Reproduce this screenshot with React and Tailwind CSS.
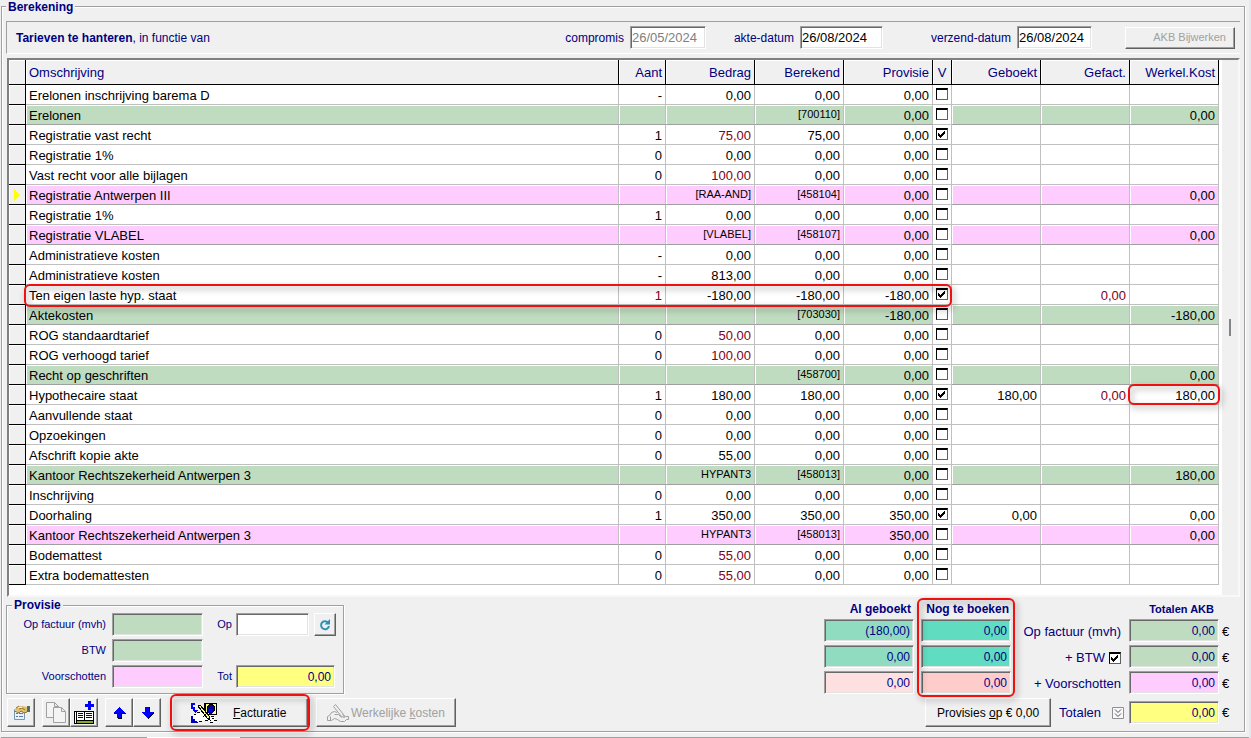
import React from "react";

const ROWS = [
  { name: "Erelonen inschrijving barema D", qty: "-", amount: "0,00", calc: "0,00", prov: "0,00" },
  { name: "Erelonen", tone: "green", calc: "[700110]", prov: "0,00", cost: "0,00" },
  { name: "Registratie vast recht", qty: "1", amount: "75,00", red: true, calc: "75,00", prov: "0,00", on: true },
  { name: "Registratie 1%", qty: "0", amount: "0,00", calc: "0,00", prov: "0,00" },
  { name: "Vast recht voor alle bijlagen", qty: "0", amount: "100,00", red: true, calc: "0,00", prov: "0,00" },
  { name: "Registratie Antwerpen III", tone: "pink", amount: "[RAA-AND]", calc: "[458104]", prov: "0,00", cost: "0,00", current: true },
  { name: "Registratie 1%", qty: "1", amount: "0,00", calc: "0,00", prov: "0,00" },
  { name: "Registratie VLABEL", tone: "pink", amount: "[VLABEL]", calc: "[458107]", prov: "0,00", cost: "0,00" },
  { name: "Administratieve kosten", qty: "-", amount: "0,00", calc: "0,00", prov: "0,00" },
  { name: "Administratieve kosten", qty: "-", amount: "813,00", calc: "0,00", prov: "0,00" },
  { name: "Ten eigen laste hyp. staat", qty: "1", redQty: true, amount: "-180,00", calc: "-180,00", prov: "-180,00", on: true, billed: "0,00" },
  { name: "Aktekosten", tone: "green", calc: "[703030]", prov: "-180,00", cost: "-180,00" },
  { name: "ROG standaardtarief", qty: "0", amount: "50,00", red: true, calc: "0,00", prov: "0,00" },
  { name: "ROG verhoogd tarief", qty: "0", amount: "100,00", red: true, calc: "0,00", prov: "0,00" },
  { name: "Recht op geschriften", tone: "green", calc: "[458700]", prov: "0,00", cost: "0,00" },
  { name: "Hypothecaire staat", qty: "1", amount: "180,00", calc: "180,00", prov: "0,00", on: true, booked: "180,00", billed: "0,00", cost: "180,00", mark: true },
  { name: "Aanvullende staat", qty: "0", amount: "0,00", calc: "0,00", prov: "0,00" },
  { name: "Opzoekingen", qty: "0", amount: "0,00", calc: "0,00", prov: "0,00" },
  { name: "Afschrift kopie akte", qty: "0", amount: "55,00", calc: "0,00", prov: "0,00" },
  { name: "Kantoor Rechtszekerheid Antwerpen 3", tone: "green", amount: "HYPANT3", calc: "[458013]", prov: "0,00", cost: "180,00" },
  { name: "Inschrijving", qty: "0", amount: "0,00", calc: "0,00", prov: "0,00" },
  { name: "Doorhaling", qty: "1", amount: "350,00", calc: "350,00", prov: "350,00", on: true, booked: "0,00", cost: "0,00" },
  { name: "Kantoor Rechtszekerheid Antwerpen 3", tone: "pink", amount: "HYPANT3", calc: "[458013]", prov: "350,00", cost: "0,00" },
  { name: "Bodemattest", qty: "0", amount: "55,00", red: true, calc: "0,00", prov: "0,00" },
  { name: "Extra bodemattesten", qty: "0", amount: "55,00", red: true, calc: "0,00", prov: "0,00" },
];

const ETCHED = "border border-[#a0a0a0] shadow-[1px_1px_0_#fff,inset_1px_1px_0_#fff]";
const SUNKEN =
  "border border-t-[#a0a0a0] border-l-[#a0a0a0] border-r-white border-b-white shadow-[inset_1px_1px_0_#696969,inset_-1px_-1px_0_#e3e3e3]";
const RAISED =
  "border border-t-white border-l-white border-r-[#606060] border-b-[#606060] shadow-[inset_-1px_-1px_0_#a0a0a0] bg-[#f0f0f0]";
const MARK =
  "pointer-events-none absolute rounded-md border-2 border-[#f01010] drop-shadow-[2px_3px_3px_rgba(0,0,0,0.4)]";

const TONES = {
  green: "bg-[#c0dcc0] border-b-[#a0a0a0] shadow-[inset_1px_1px_0_#fff]",
  pink: "bg-[#ffccff] border-b-[#a0a0a0] shadow-[inset_1px_1px_0_#fff]",
  plain: "border-b-[#c0c0c0]",
};

function Check({ checked, label }) {
  return (
    <span className="inline-grid size-3 align-top">
      <input
        type="checkbox"
        defaultChecked={checked}
        aria-label={label}
        className="peer col-start-1 row-start-1 size-3 appearance-none border border-[#606060] border-t-2 border-t-black border-l-black bg-white"
      />
      <svg
        viewBox="0 0 12 12"
        shapeRendering="crispEdges"
        className="pointer-events-none invisible col-start-1 row-start-1 size-3 peer-checked:visible"
      >
        <path
          d="M2 5h1v3h-1zM3 6h1v3h-1zM4 7h1v3h-1zM5 6h1v3h-1zM6 5h1v3h-1zM7 4h1v3h-1zM8 3h1v3h-1z"
          fill="#000"
        />
      </svg>
    </span>
  );
}

function Cell({ row, text, red, mark }) {
  const code = text && /[A-Z\[]/.test(text);
  return (
    <td
      className={`relative h-5 border-r border-b border-r-[#c0c0c0] p-0 pr-[3px] text-right ${
        TONES[row.tone || "plain"]
      } ${red ? "text-[#800020]" : "text-black"} ${
        code ? "align-top text-[11px] leading-[19px]" : "pt-[2px] leading-[17px]"
      }`}
    >
      {text}
      {mark && <span className={`${MARK} -inset-x-[2px] -inset-y-px`} />}
    </td>
  );
}

function Head({ children, left }) {
  return (
    <th
      className={`h-[25px] border-r border-b border-black bg-[#f0f0f0] px-[3px] pt-px pb-0 font-normal shadow-[inset_1px_1px_0_#fff] ${
        left ? "text-left" : "text-right"
      }`}
    >
      {children}
    </th>
  );
}

function Grid() {
  return (
    <div className="mt-1 ml-px flex border-2 border-t-[#808080] border-l-[#808080] border-r-[#f8f8f8] border-b-[#f8f8f8] bg-white pb-[10px]">
      <div className="relative min-w-0 flex-1">
        <table className="w-full table-fixed border-separate border-spacing-0 text-[13px]">
          <colgroup>
            <col className="w-[17px]" />
            <col />
            <col className="w-[47px]" />
            <col className="w-[89px]" />
            <col className="w-[89px]" />
            <col className="w-[89px]" />
            <col className="w-[19px]" />
            <col className="w-[89px]" />
            <col className="w-[89px]" />
            <col className="w-[89px]" />
          </colgroup>
          <thead className="text-[#000080]">
            <tr>
              <Head />
              <Head left>Omschrijving</Head>
              <Head>Aant</Head>
              <Head>Bedrag</Head>
              <Head>Berekend</Head>
              <Head>Provisie</Head>
              <th className="border-r border-b border-black bg-[#f0f0f0] p-0 pt-px text-center font-normal shadow-[inset_1px_1px_0_#fff]">
                V
              </th>
              <Head>Geboekt</Head>
              <Head>Gefact.</Head>
              <Head>Werkel.Kost</Head>
            </tr>
          </thead>
          <tbody>
            {ROWS.map((row, i) => (
              <tr key={i}>
                <td className="h-5 border-r border-b border-black bg-[#f0f0f0] p-0 shadow-[inset_1px_1px_0_#fff]">
                  {row.current && (
                    <svg viewBox="0 0 6 12" className="ml-[5px] h-3 w-[6px]">
                      <path d="M0 0L6 6L0 12z" fill="#ff0" />
                    </svg>
                  )}
                </td>
                <td
                  className={`h-5 truncate border-r border-b border-r-[#c0c0c0] p-0 pt-[2px] pl-[3px] leading-[17px] text-black ${
                    TONES[row.tone || "plain"]
                  }`}
                >
                  {row.name}
                </td>
                <Cell row={row} text={row.qty} red={row.redQty} />
                <Cell row={row} text={row.amount} red={row.red} />
                <Cell row={row} text={row.calc} />
                <Cell row={row} text={row.prov} />
                <td className="h-5 border-r border-b border-[#c0c0c0] p-0 pt-[3px] text-center align-top leading-3">
                  <Check checked={!!row.on} label={row.name} />
                </td>
                <Cell row={row} text={row.booked} />
                <Cell row={row} text={row.billed} red />
                <Cell row={row} text={row.cost} mark={row.mark} />
              </tr>
            ))}
          </tbody>
        </table>
        <span className={`${MARK} top-[224px] right-[267px] left-[15px] h-[23px]`} />
      </div>
      <div className="-mb-[10px] ml-[3px] flex w-4 items-center justify-center bg-[#f0f0f0]">
        <span className="h-[17px] w-[2px] bg-[#858585]" />
      </div>
    </div>
  );
}

function DateField({ id, label, value, muted, width }) {
  return (
    <div className="flex items-center gap-[6px]">
      <label htmlFor={id}>{label}</label>
      <input
        id={id}
        defaultValue={value}
        disabled={muted}
        className={`h-[23px] bg-white px-px text-[13px] ${SUNKEN} ${width} ${muted ? "text-[#808080]" : "text-black"}`}
      />
    </div>
  );
}

function Field({ label, value, tone, width = "w-[91px]", id }) {
  return (
    <input
      id={id}
      aria-label={label}
      defaultValue={value}
      className={`h-[23px] px-[3px] text-right text-[12px] text-[#000080] ${SUNKEN} ${tone} ${width}`}
    />
  );
}

function HandIcon({ muted }) {
  if (muted) {
    return (
      <svg viewBox="0 0 24 18" className="h-[18px] w-6 shrink-0" fill="none" stroke="#a0a0a0">
        <path d="M1.500 16.500V12.500L3.500 11.500L5.500 8.500L8.500 7.500L11 8.500M1.500 16.500H5.500L8.500 14.500L11.500 15.500L14.500 17.500H18.500L20.500 15.500H22.500V12.500H19.500L16.500 10.500M4.500 12.500V16.500" />
        <path d="M7.500 2.500L9.500 .5L17.500 10.500L18.500 13.500L15.500 12.500zM8.500 10.500H12.500L15.500 13.500" />
      </svg>
    );
  }
  return (
    <svg viewBox="0 0 28 22" className="h-[22px] w-7 shrink-0" shapeRendering="crispEdges">
      <path d="M14 1H27V13H14z" fill="#000" />
      <path d="M16 2H19L17 5V9L19 12H16zM23 2H26V12H22L25 8V5z" fill="#ffff80" />
      <path d="M18 5L20 3H23L24 5V9L21 12H19L18 9z" fill="#0000a0" />
      <path d="M19 7H22V10H19z" fill="#0000ff" />
      <path d="M3 20V13L6 12L8 10H12L18 12L21 14L25 15L26 20H20L15 18L11 20L7 19L5 21z" fill="#fff" />
      <path d="M4 12.500H6M7 10.500H10M18 12.500H20M21 14.500H24M5 20.500H8M9 19.500H12M15 18.500H18M20 20.500H23M24 18.500H27M22 16.500H24" fill="none" stroke="#000" />
      <path d="M1 14H3V17H5V19H7V21H1z" fill="#0000c0" />
      <path d="M8 4L10 3L19 14L20 18L17 16z" fill="#ffff80" stroke="#000" />
      <path d="M18 10L13 15" stroke="#000" />
      <path d="M5 2H2V6H4V9" fill="none" stroke="#0000ff" strokeWidth="2" />
      <path d="M2 8H8L5 11z" fill="#0000ff" />
    </svg>
  );
}

function ToolButton({ label, children, disabled }) {
  return (
    <button
      type="button"
      aria-label={label}
      disabled={disabled}
      className={`flex h-[29px] w-7 items-center justify-center ${RAISED}`}
    >
      {children}
    </button>
  );
}

function Arrow({ down }) {
  return (
    <svg viewBox="0 0 13 12" className="h-3 w-[13px]" shapeRendering="crispEdges">
      {down ? (
        <>
          <path d="M5 0H9V5H13V6L7 12L6 11L1 6V5H5z" fill="#000" />
          <path d="M4 0H8V5H12L6 11L0 5H4z" fill="#0000ff" />
        </>
      ) : (
        <>
          <path d="M6 0L13 6V7H9V12H5V7H1z" fill="#000" />
          <path d="M6 0L12 6H8V11H4V6H0z" fill="#0000ff" />
        </>
      )}
    </svg>
  );
}

function Toolbar() {
  return (
    <div className="mt-1 ml-px flex">
      <ToolButton label="Eigenschappen">
        <svg viewBox="0 0 17 16" className="h-4 w-[17px]">
          <path d="M1.500 4.500H11.500V14.500H1.500z" fill="#e8f2fa" stroke="#7898b0" />
          <path d="M3 8.500H5M3 11.500H5M6 8.500H10M6 11.500H10" stroke="#5080b0" />
          <path d="M1 5L3 3L6 1H10L14 2V7L11 8L8 6L6 8L4 6z" fill="#e0c070" />
          <path d="M1 6L4 7L6 8L8 6L11 8L14 7M6 1L3 3M6 4L9 3L12 5" fill="none" stroke="#907030" />
          <path d="M5 2.500H9" stroke="#fff4c0" />
          <path d="M14 1H17V7H14z" fill="#507058" />
        </svg>
      </ToolButton>
      <div className="ml-[7px] flex">
        <ToolButton label="Kopiëren" disabled>
          <svg viewBox="0 0 21 21" className="size-[21px]" fill="#f4f4f4" stroke="#a0a0a0">
            <path d="M.5 .5H8.500L12.500 4.500V15.500H.5zM8.500 .5V4.500H12.500" />
            <path d="M7.500 5.500H15.500L19.500 9.500V20.500H7.500zM15.500 5.500V9.500H19.500" />
          </svg>
        </ToolButton>
        <ToolButton label="Regel toevoegen">
          <svg viewBox="0 0 21 23" className="h-[23px] w-[21px]" shapeRendering="crispEdges">
            <path d="M0 10H20V23H0z" fill="#000" />
            <path d="M1 11H2V22H1zM3 11H10V19H3zM11 11H19V19H11z" fill="#fff" />
            <path d="M3 20H19V22H3z" fill="#80b020" />
            <path d="M4 12H9V13H4zM4 14H9V15H4zM4 16H9V17H4zM12 12H18V13H12zM12 14H18V15H12zM12 16H18V17H12z" fill="#000080" />
            <path d="M14 0H17V3H20V6H17V9H14V6H11V3H14z" fill="#0000ff" />
          </svg>
        </ToolButton>
      </div>
      <div className="ml-[7px] flex">
        <ToolButton label="Omhoog">
          <Arrow />
        </ToolButton>
        <ToolButton label="Omlaag">
          <Arrow down />
        </ToolButton>
      </div>
      <div className="relative ml-[11px] flex">
        <button type="button" className={`flex h-[29px] w-[136px] items-center pl-[17px] text-[12px] text-black ${RAISED}`}>
          <HandIcon />
          <span className="ml-[15px]">
            <u>F</u>acturatie
          </span>
        </button>
        <span className={`${MARK} -inset-x-[2px] -inset-y-[4px]`} />
      </div>
      <button
        type="button"
        disabled
        className={`ml-2 flex h-[29px] w-[140px] items-center pl-[9px] text-[12px] text-[#a0a0a0] ${RAISED}`}
      >
        <HandIcon muted />
        <span className="ml-px whitespace-nowrap">
          Werkelijke <u>k</u>osten
        </span>
      </button>
    </div>
  );
}

function Provisie() {
  return (
    <fieldset className={`w-[338px] pb-[5px] pl-1 text-[11px] ${ETCHED}`}>
      <legend className="ml-px bg-[#f0f0f0] px-[2px] text-[12px] leading-[14px] font-bold">Provisie</legend>
      <div className="grid grid-cols-[97px_91px_33px_105px] items-center gap-y-[3px] pt-px">
        <label htmlFor="p-factuur" className="pr-[2px] text-right">
          Op factuur (mvh)
        </label>
        <div className="ml-1 flex">
          <Field id="p-factuur" tone="bg-[#c0dcc0]" />
        </div>
        <label htmlFor="p-op" className="text-right">
          Op
        </label>
        <div className="ml-1 flex gap-[5px]">
          <Field id="p-op" tone="bg-white" width="w-[73px]" />
          <button
            type="button"
            aria-label="Vernieuwen"
            className={`flex h-[23px] w-[22px] shrink-0 items-center justify-center ${RAISED}`}
          >
            <svg viewBox="0 0 12 12" className="size-3" fill="none">
              <path d="M9 3.500A4 4 0 1 0 10 7" stroke="#3090b8" strokeWidth="2" />
              <path d="M5.500 5.500H11V0z" fill="#3090b8" />
            </svg>
          </button>
        </div>
        <label htmlFor="p-btw" className="pr-[2px] text-right">
          BTW
        </label>
        <div className="ml-1 flex">
          <Field id="p-btw" tone="bg-[#c0dcc0]" />
        </div>
        <span />
        <span />
        <label htmlFor="p-voor" className="pr-[2px] text-right">
          Voorschotten
        </label>
        <div className="ml-1 flex">
          <Field id="p-voor" tone="bg-[#ffccff]" />
        </div>
        <label htmlFor="p-tot" className="text-right">
          Tot
        </label>
        <div className="ml-1 flex">
          <Field id="p-tot" value="0,00" tone="bg-[#ffff80]" width="w-[99px]" />
        </div>
      </div>
    </fieldset>
  );
}

function Totals() {
  return (
    <div className="mr-[9px] flex flex-col items-end text-[13px]">
      <div className="flex">
        <div className="flex w-[90px] flex-col gap-[3px]">
          <div className="pr-[3px] text-right text-[12px] leading-[14px] font-bold">Al geboekt</div>
          <Field label="Al geboekt, op factuur" value="(180,00)" tone="bg-[#90dcc0]" width="w-full" />
          <Field label="Al geboekt, BTW" value="0,00" tone="bg-[#90dcc0]" width="w-full" />
          <Field label="Al geboekt, voorschotten" value="0,00" tone="bg-[#ffe0e0]" width="w-full" />
        </div>
        <div className="relative ml-[7px] flex w-[90px] flex-col gap-[3px]">
          <div className="pr-[2px] text-right text-[12px] leading-[14px] font-bold whitespace-nowrap">Nog te boeken</div>
          <Field label="Nog te boeken, op factuur" value="0,00" tone="bg-[#60dcc0]" width="w-full" />
          <Field label="Nog te boeken, BTW" value="0,00" tone="bg-[#60dcc0]" width="w-full" />
          <Field label="Nog te boeken, voorschotten" value="0,00" tone="bg-[#ffcccc]" width="w-full" />
          <span className={`${MARK} -inset-x-1 -top-1 -bottom-[2px]`} />
        </div>
        <div className="flex w-[110px] flex-col gap-[3px] pt-[18px] text-right">
          <label htmlFor="t-factuur" className="leading-[23px] whitespace-nowrap">
            Op factuur (mvh)
          </label>
          <div className="flex h-[23px] items-center justify-end gap-1">
            + BTW
            <Check checked label="BTW" />
          </div>
          <label htmlFor="t-voor" className="leading-[23px]">
            + Voorschotten
          </label>
        </div>
        <div className="ml-2 flex w-[90px] flex-col gap-[3px]">
          <div className="pr-[5px] text-right text-[11px] leading-[14px] font-bold">Totalen AKB</div>
          <Field id="t-factuur" value="0,00" tone="bg-[#c0dcc0]" width="w-full" />
          <Field label="Totaal BTW" value="0,00" tone="bg-[#c0dcc0]" width="w-full" />
          <Field id="t-voor" value="0,00" tone="bg-[#ffccff]" width="w-full" />
        </div>
        <div className="flex w-3 flex-col gap-[3px] pt-[18px] pl-[3px] leading-[23px] text-black">
          <span>€</span>
          <span>€</span>
          <span>€</span>
        </div>
      </div>
      <div className="mt-[3px] flex items-center">
        <button type="button" className={`h-[29px] w-[126px] text-[12px] text-black ${RAISED}`}>
          Provisies <u>o</u>p € 0,00
        </button>
        <label htmlFor="t-tot" className="ml-2">
          Totalen
        </label>
        <button type="button" aria-label="Details" className="ml-[11px]">
          <svg viewBox="0 0 12 12" className="size-3" fill="none">
            <path d="M.5 .5H11.500V11.500H.5z" stroke="#909090" fill="#f8f8f8" />
            <path d="M3 2.500L6 5.500L9 2.500M3 6.500L6 9.500L9 6.500" stroke="#505070" />
          </svg>
        </button>
        <div className="ml-[5px] flex">
          <Field id="t-tot" value="0,00" tone="bg-[#ffff80]" width="w-[90px]" />
        </div>
        <span className="w-3 pl-[3px] text-black">€</span>
      </div>
    </div>
  );
}

export default function App() {
  return (
    <main className="flex min-h-screen flex-col overflow-hidden border-r-2 border-[#dfe9f2] bg-[#f0f0f0] pl-px font-['Liberation_Sans',Arial,sans-serif] text-[#000080]">
      <fieldset className={`mr-1 min-w-0 px-1 pb-1 ${ETCHED}`}>
        <legend className="bg-[#f0f0f0] px-[2px] pt-[2px] text-[12px] leading-[11px] font-bold">Berekening</legend>
        <section className="mt-2 flex h-[33px] items-center border-t border-b border-l border-t-[#a0a0a0] border-b-white border-l-[#a0a0a0] pr-[5px] pl-[9px] text-[12px]">
          <p className="mr-auto">
            <b>Tarieven te hanteren</b>, in functie van
          </p>
          <DateField id="compromis" label="compromis" value="26/05/2024" muted width="w-[76px]" />
          <div className="ml-7">
            <DateField id="akte" label="akte-datum" value="26/08/2024" width="w-[83px]" />
          </div>
          <div className="ml-12">
            <DateField id="verzend" label="verzend-datum" value="26/08/2024" width="w-[75px]" />
          </div>
          <button
            type="button"
            disabled
            className={`ml-[33px] h-[22px] w-[110px] pr-2 text-right text-[11px] text-[#a0a0a0] ${RAISED}`}
          >
            AKB Bijwerken
          </button>
        </section>
        <Grid />
        <div className="flex items-start justify-between">
          <div className="pt-px">
            <Provisie />
            <Toolbar />
          </div>
          <div className="pt-[5px]">
            <Totals />
          </div>
        </div>
      </fieldset>
      <div className="mt-[5px] flex h-px">
        <span className="w-[146px] bg-[#a0a0a0]" />
        <span className="w-[93px] bg-white" />
        <span className="flex-1 bg-[#a0a0a0]" />
      </div>
    </main>
  );
}
